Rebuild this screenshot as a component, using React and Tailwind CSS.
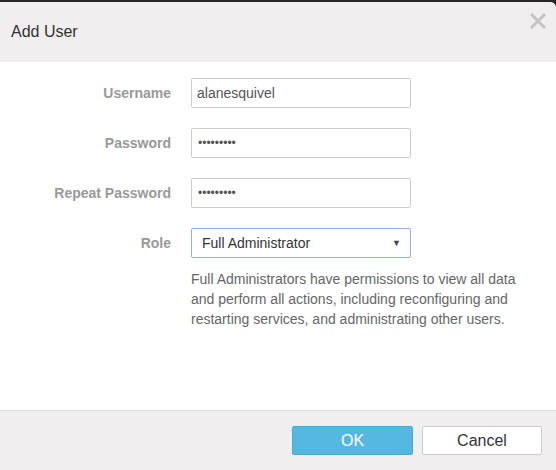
import React, { useState } from "react";

const fields = [
  { label: "Username", type: "text", value: "alanesquivel" },
  { label: "Password", type: "password", value: "abcdefghi" },
  { label: "Repeat Password", type: "password", value: "abcdefghi" },
];

const App = () => {
  const [role, setRole] = useState("Full Administrator");

  return (
    <div className="w-[556px] h-[470px] bg-[#262626] pt-[2px] overflow-hidden font-['Liberation_Sans',Arial,sans-serif]">
      <div className="h-[468px] flex flex-col bg-white rounded-tr-[6px] overflow-hidden">
        {/* Header */}
        <header className="h-[60px] shrink-0 bg-[#f0eeee] flex items-center justify-between pl-[11px] pr-[9px]">
          <h1 className="text-[16px] text-[#333] leading-none">Add User</h1>
          <button className="self-start mt-[10px]" aria-label="Close">
            <svg width="18" height="18" viewBox="0 0 18 18">
              <path d="M2 2 L16 16 M16 2 L2 16" stroke="#c4c4c4" strokeWidth="3" />
            </svg>
          </button>
        </header>

        {/* Form */}
        <section className="flex-1 pt-[16px]">
          <div className="grid grid-cols-[171px_220px] gap-x-5 gap-y-5 items-center">
            {fields.map((f) => (
              <React.Fragment key={f.label}>
                <label className="text-right text-[14px] font-bold text-[#999]">{f.label}</label>
                <input
                  type={f.type}
                  defaultValue={f.value}
                  className={
                    f.type === "password"
                      ? "h-[30px] border border-[#ccc] rounded-[2px] px-[6px] text-[12px] text-[#555] outline-none"
                      : "h-[30px] border border-[#ccc] rounded-[2px] px-[5px] text-[14px] text-[#555] outline-none"
                  }
                />
              </React.Fragment>
            ))}
            <label className="text-right text-[14px] font-bold text-[#999]">Role</label>
            <div className="relative h-[30px]">
              <select
                value={role}
                onChange={(e) => setRole(e.target.value)}
                className="appearance-none w-full h-full border border-[#8db1ee] rounded-[2px] pl-[10px] text-[14px] text-[#333] bg-white outline-none"
              >
                <option>Full Administrator</option>
                <option>Read Only</option>
              </select>
              <span className="absolute right-[10px] top-[9px] text-[9px] text-[#444] pointer-events-none">▼</span>
            </div>
          </div>
          <p className="ml-[191px] mt-[11px] w-[330px] text-[14px] leading-[20px] text-[#666]">
            Full Administrators have permissions to view all data and perform all actions, including reconfiguring
            and restarting services, and administrating other users.
          </p>
        </section>

        {/* Footer */}
        <footer className="h-[60px] shrink-0 bg-[#f0eeee] border-t border-[#ddd] flex items-start justify-end gap-[9px] pt-[15px] pr-[14px]">
          <button className="w-[121px] h-[29px] bg-[#54b8e3] border border-[#48a8d4] rounded-[2px] text-white text-[16px]">
            OK
          </button>
          <button className="w-[120px] h-[29px] bg-white border border-[#ccc] rounded-[2px] text-[#333] text-[16px]">
            Cancel
          </button>
        </footer>
      </div>
    </div>
  );
};

export default App;
